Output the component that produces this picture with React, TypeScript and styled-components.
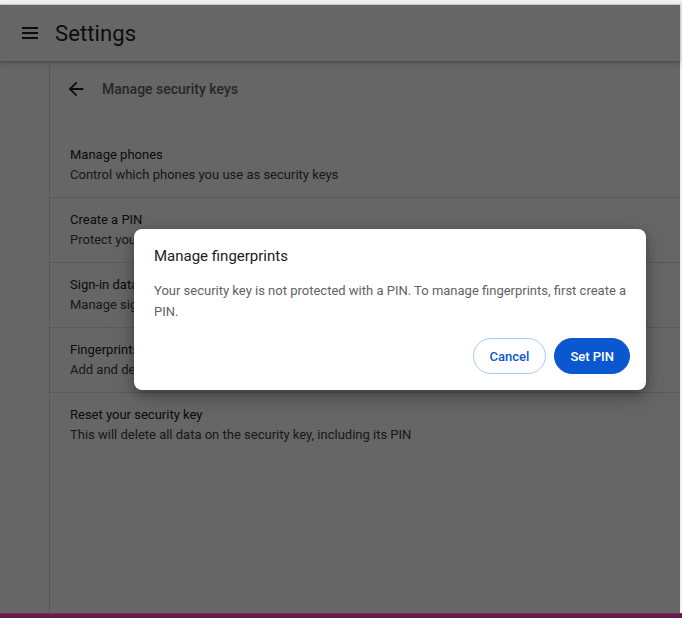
import React from "react";
import styled, { createGlobalStyle } from "styled-components";

const GlobalStyle = createGlobalStyle`
  html, body { margin: 0; padding: 0; background: #ffffff; }
  body { font-family: Roboto, "Noto Sans", "Liberation Sans", sans-serif; -webkit-font-smoothing: antialiased; }
  * { box-sizing: border-box; }
`;

const Frame = styled.div`
  width: 682px;
  height: 618px;
  display: flex;
  flex-direction: column;
  overflow: hidden;
`;

const TitleStrip = styled.div`
  height: 5px;
  flex: none;
  background: #f3f3f3;
  border-bottom: 1px solid #d4d4d4;
`;

const Taskbar = styled.div`
  height: 5px;
  flex: none;
  background: linear-gradient(#8a3a6c 0, #6c1d4f 1px, #5e1744 100%);
`;

const AppWindow = styled.div`
  position: relative;
  flex: 1;
  display: flex;
  flex-direction: column;
  background: #ffffff;
  border-right: 2px solid #f1f1f1;
`;

const Toolbar = styled.header`
  height: 56px;
  flex: none;
  display: flex;
  align-items: center;
  padding-left: 22px;
  gap: 17px;
  background: #ffffff;
  box-shadow: 0 1px 2px rgba(60, 64, 67, 0.3), 0 2px 6px 2px rgba(60, 64, 67, 0.15);
  position: relative;
  z-index: 1;
`;

const AppTitle = styled.h1`
  margin: 0;
  font-size: 22px;
  font-weight: 400;
  color: #202124;
  letter-spacing: 0.1px;
`;

const Body = styled.div`
  flex: 1;
  display: flex;
`;

const Nav = styled.nav`
  width: 50px;
  flex: none;
  border-right: 1px solid #dadce0;
`;

const Main = styled.main`
  flex: 1;
  display: flex;
  flex-direction: column;
`;

const SubHeader = styled.div`
  height: 56px;
  display: flex;
  align-items: center;
  padding-left: 15px;
  gap: 15px;
`;

const SubTitle = styled.h2`
  margin: 0;
  font-size: 14px;
  font-weight: 500;
  color: #5f6368;
`;

const List = styled.div`
  margin-top: 16px;
  display: flex;
  flex-direction: column;
`;

const Row = styled.div<{ $first?: boolean }>`
  height: ${(p) => (p.$first ? 64 : 65)}px;
  border-top: ${(p) => (p.$first ? "none" : "1px solid #e0e0e0")};
  display: flex;
  flex-direction: column;
  justify-content: center;
  padding-left: 20px;
`;

const Primary = styled.div`
  font-size: 13px;
  line-height: 20px;
  color: #202124;
`;

const Secondary = styled.div`
  font-size: 13px;
  line-height: 20px;
  color: #3c4043;
`;

const Scrim = styled.div`
  position: absolute;
  inset: 0;
  background: rgba(0, 0, 0, 0.6);
  z-index: 2;
`;

const Dialog = styled.div`
  position: absolute;
  left: 134px;
  top: 224px;
  width: 512px;
  z-index: 3;
  background: #ffffff;
  border-radius: 8px;
  box-shadow: 0 4px 10px rgba(0, 0, 0, 0.25), 0 8px 24px rgba(0, 0, 0, 0.2);
  display: flex;
  flex-direction: column;
  padding: 16px 16px 16px 20px;
`;

const DialogTitle = styled.div`
  font-size: 15px;
  line-height: 22px;
  color: #202124;
`;

const DialogBody = styled.p`
  margin: 13px 0 0;
  font-size: 13px;
  line-height: 21px;
  color: #5f6368;
`;

const ButtonRow = styled.div`
  margin-top: 16px;
  display: flex;
  justify-content: flex-end;
  gap: 8px;
`;

const Button = styled.button<{ $primary?: boolean }>`
  height: 36px;
  padding: 0 ${(p) => (p.$primary ? 15 : 16)}px;
  border-radius: 18px;
  font-family: Roboto, "Liberation Sans", sans-serif;
  font-size: 13px;
  font-weight: 500;
  cursor: pointer;
  border: 1px solid ${(p) => (p.$primary ? "#0b57d0" : "#a8c7fa")};
  background: ${(p) => (p.$primary ? "#0b57d0" : "#ffffff")};
  color: ${(p) => (p.$primary ? "#ffffff" : "#0b57d0")};
`;

const MenuIcon = () => (
  <svg width="16" height="12" viewBox="0 0 16 12" fill="#202124">
    <rect x="0" y="0" width="16" height="2" />
    <rect x="0" y="5" width="16" height="2" />
    <rect x="0" y="10" width="16" height="2" />
  </svg>
);

const BackIcon = () => (
  <svg width="22" height="22" viewBox="0 0 24 24" fill="#202124">
    <path d="M20 11H7.83l5.59-5.59L12 4l-8 8 8 8 1.41-1.41L7.83 13H20v-2z" />
  </svg>
);

const rows = [
  ["Manage phones", "Control which phones you use as security keys"],
  ["Create a PIN", "Protect your security key with a PIN (Personal Identification Number)"],
  ["Sign-in data", "Manage sign-in data stored on your security key"],
  ["Fingerprints", "Add and delete fingerprints saved on your security key"],
  ["Reset your security key", "This will delete all data on the security key, including its PIN"],
];

export default function App() {
  return (
    <>
      <GlobalStyle />
      <Frame>
        <TitleStrip />
        <AppWindow>
          <Toolbar>
            <MenuIcon />
            <AppTitle>Settings</AppTitle>
          </Toolbar>
          <Body>
            <Nav />
            <Main>
              <SubHeader>
                <BackIcon />
                <SubTitle>Manage security keys</SubTitle>
              </SubHeader>
              <List>
                {rows.map(([p, s], i) => (
                  <Row key={p} $first={i === 0}>
                    <Primary>{p}</Primary>
                    <Secondary>{s}</Secondary>
                  </Row>
                ))}
              </List>
            </Main>
          </Body>
          <Scrim />
          <Dialog role="dialog">
            <DialogTitle>Manage fingerprints</DialogTitle>
            <DialogBody>
              Your security key is not protected with a PIN. To manage fingerprints, first create a PIN.
            </DialogBody>
            <ButtonRow>
              <Button>Cancel</Button>
              <Button $primary>Set PIN</Button>
            </ButtonRow>
          </Dialog>
        </AppWindow>
        <Taskbar />
      </Frame>
    </>
  );
}
